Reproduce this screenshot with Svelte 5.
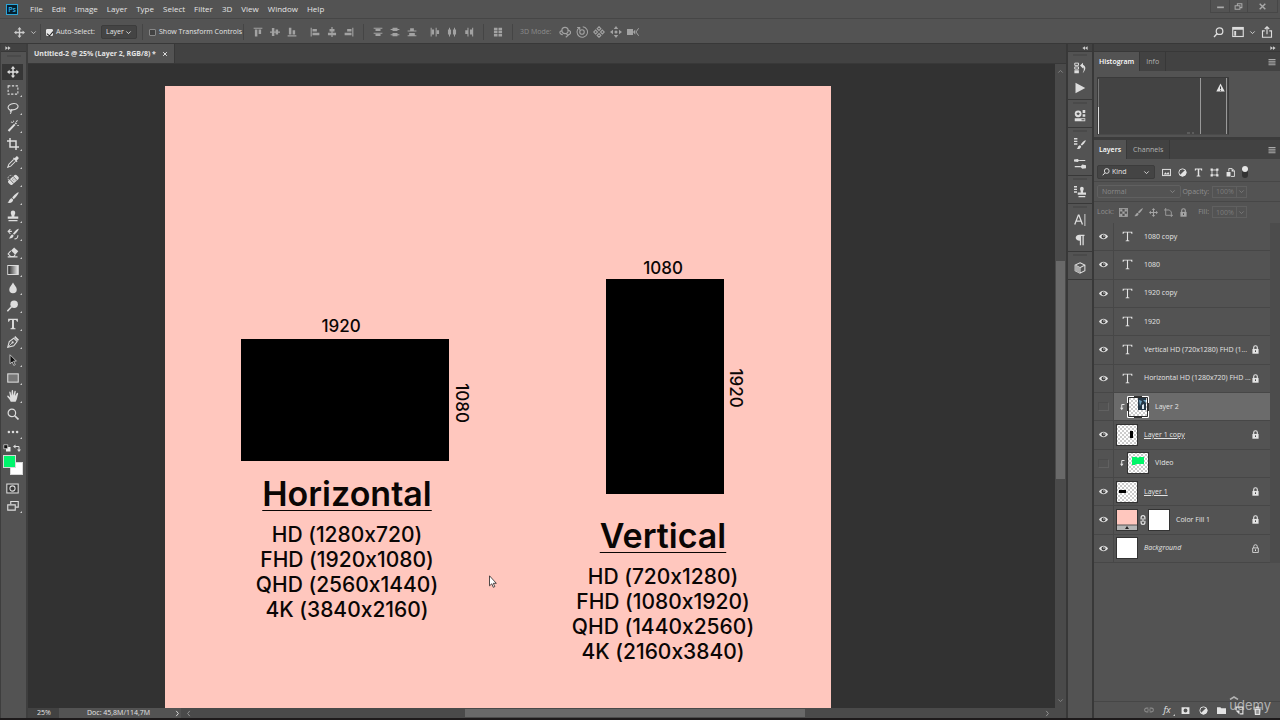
<script>
	const menus = ['File', 'Edit', 'Image', 'Layer', 'Type', 'Select', 'Filter', '3D', 'View', 'Window', 'Help'];

	// every icon lives on a 16x16 grid
	const icons = {
		move: '<path d="M8 0l3 3.500H9V7h3.500V5L16 8l-3.500 3V9H9v3.500h2L8 16l-3-3.500h2V9H3.500v2L0 8l3.500-3v2H7V3.500H5z"/>',
		marquee: '<rect x="1.500" y="2.500" width="13" height="11" fill="none" stroke="currentColor" stroke-width="1.400" stroke-dasharray="3 2"/>',
		lasso: '<path d="M5 11C1 10 .5 6.500 3 4.300 6 1.500 12.500 1.200 14.300 4.200 16 7.500 12 10.800 6.500 10.500 3.500 10 3.500 12.500 5.500 12.300 7 12 6.500 10 5.200 10.200M5 12.500c.8 1 .2 2.500-1 3" fill="none" stroke="currentColor" stroke-width="1.400"/>',
		wand: '<path d="M1 13.500L9.500 5l1.800 1.800L3 15.500zM10.300 4.200l1.200-1.200 1.800 1.800L12 6zM9 0l.6 2.500L8 3zM13.500 0l1 1-2 2-.8-.8zM13.500 6.500l2.500.5v1l-2.500-.5zM5.500 2l2.500 1-.5 1L5 3z"/>',
		crop: '<path d="M4 0v12h12M0 4h12v12" fill="none" stroke="currentColor" stroke-width="2"/>',
		eyedropper: '<path d="M9 4.500L2.500 11 1 15l4-1.500L11.500 7" fill="none" stroke="currentColor" stroke-width="1.400"/><path d="M8 3l1.300-1 1 1 2-2.300c1.300-1 4 1.500 3 3L13 6l1 1-1.200 1.300z"/>',
		heal: '<g transform="rotate(-42 8 8)"><rect x="1" y="4.500" width="15" height="7.500" rx="2.500"/><path d="M5.500 4.500v7.500M11.500 4.500v7.500" stroke="#535353"/><path d="M8 6.500v1M8 9v1M9.500 6.500v1M9.500 9v1" stroke="#535353"/></g><path d="M2 8C0 4 3 1 7 2" fill="none" stroke="currentColor" stroke-dasharray="1.500 1"/>',
		brush: '<path d="M15.500.5c.8.8-4 7.500-6.500 9L7 7.500C8.500 5 14.500-.2 15.500.5zM6.300 8.300l2 2C8 13.500 4.500 15.500.5 14c2.500-.5 2-4.800 5.800-5.700z"/>',
		stamp: '<path d="M5 3.500a3 3 0 0 1 6 0c0 2-1.200 2.500-1.200 5H15v3.300H1V8.500h5.200C6.200 6 5 5.500 5 3.500zM2 13.200h12V15H2z"/>',
		history: '<path d="M15.500 1c.8.8-3.500 6.500-6 8L8 7.500C9.500 5 14.500.3 15.500 1zM7.300 8.500l1.500 1.500c-.3 3-3 4.500-6.500 4 2-.7 1.500-4.500 5-5.500z"/><path d="M1 4.500h5.500M4.500 1.500L1.500 4.500 4.500 8M10 14.500c3 0 4.500-2 4.500-5" fill="none" stroke="currentColor" stroke-width="1.400"/>',
		eraser: '<path d="M9.500 2l5.500 5-4 4.500L5.500 6z"/><path d="M5 6.500L1.500 10.500 5 14h4l2-2.500M1 14.500h13" fill="none" stroke="currentColor" stroke-width="1.400"/>',
		gradient: '<defs><linearGradient id="ramp"><stop offset="0" stop-color="#222"/><stop offset="1" stop-color="#eee"/></linearGradient></defs><rect x="1" y="2" width="14" height="12" fill="url(#ramp)" stroke="currentColor" stroke-width="1.300"/>',
		blur: '<path d="M8 .5c2 4 5 6 5 9.500a5 5 0 0 1-10 0C3 6.500 6 4.500 8 .5z"/>',
		dodge: '<circle cx="9.500" cy="5.500" r="5"/><path d="M6 9l-5.500 6" stroke="currentColor" stroke-width="2"/>',
		type: '<path d="M1.500 1h13v4h-1.200c-.4-1.800-1-2.500-2.800-2.500H9.300V12c0 1.300.5 1.600 2 1.700V15H4.700v-1.300c1.500-.1 2-.4 2-1.700V2.500H5.500C3.700 2.500 3.100 3.200 2.700 5H1.500z"/>',
		thinType: '<path d="M1 1h14v3.500h-1c-.4-1.700-1-2.200-2.500-2.200H8.800V12.500c0 1.100.5 1.400 2 1.500v1H5.200v-1c1.500-.1 2-.4 2-1.500V2.300H4.500C3 2.300 2.400 2.800 2 4.500H1z"/>',
		pen: '<path d="M1 15L3 7.500 9 3l4.500 4.500L9 13z" fill="none" stroke="currentColor" stroke-width="1.400"/><path d="M1 15l6-6" stroke="currentColor"/><circle cx="7.500" cy="8.500" r="1.400"/><path d="M9.500 1.500l1.500-1.500 5 5-1.500 1.500z"/>',
		pathSelect: '<path d="M4 1l8.500 8.500H8.800L11 14.300 9 15.200 7 10.500 4 13z" fill="#111" stroke="currentColor"/>',
		rect: '<rect x="1" y="2.500" width="14" height="11" fill="#777" stroke="currentColor" stroke-width="1.400"/>',
		hand: '<path d="M5 15.500C4 12.500 1.500 10.500.3 8.500c-.2-1.300 1.400-1.300 2.200-.3L4.300 10 3 3c0-1.300 1.500-1.300 1.800 0l1 4.500L6.300 1c.2-1.200 1.700-1.200 1.800 0l.3 6.300L10 1.700c.4-1.100 1.800-.8 1.700.4l-.9 6 2.400-4c.8-.9 1.900-.2 1.600.8C13.500 9 13.800 12 11.500 15.500z"/>',
		zoom: '<circle cx="6.500" cy="6.500" r="5" fill="none" stroke="currentColor" stroke-width="1.600"/><path d="M10.300 10.300l5 5" stroke="currentColor" stroke-width="2.200"/>',
		dots: '<circle cx="2.500" cy="8" r="1.700"/><circle cx="8" cy="8" r="1.700"/><circle cx="13.500" cy="8" r="1.700"/>',
		quickMask: '<rect x="1" y="2.500" width="14" height="11" fill="#3a3a3a" stroke="currentColor" stroke-width="1.300"/><circle cx="8" cy="8" r="3.200" fill="none" stroke="currentColor" stroke-width="1.300"/>',
		screen: '<path d="M5 5.500V2h10v7.500h-3.500" fill="none" stroke="currentColor" stroke-width="1.500"/><path d="M1 6.500h10v7H1z" fill="none" stroke="currentColor" stroke-width="1.500"/>',
		chevron: '<path d="M3 5.500l5 5 5-5" fill="none" stroke="currentColor" stroke-width="2"/>',
		up: '<path d="M3 10.500l5-5 5 5" fill="none" stroke="currentColor" stroke-width="2"/>',
		alignTop: '<path d="M1 1h14v1.800H1zM3 4h4v11H3zM9 4h4v7H9z"/>',
		alignMiddle: '<path d="M0 7h16v2H0zM3 1.500h4v13H3zM9 4h4v8H9z"/>',
		alignBottom: '<path d="M1 13.200h14V15H1zM3 1h4v11H3zM9 5h4v7H9z"/>',
		alignLeft: '<path d="M1 1h1.800v14H1zM4 3h7v4H4zM4 9h11v4H4z"/>',
		alignCenter: '<path d="M7 0h2v16H7zM4 3h8v4H4zM1.500 9h13v4h-13z"/>',
		alignRight: '<path d="M13.200 1H15v14h-1.800zM5 3h7v4H5zM1 9h11v4H1z"/>',
		distTop: '<path d="M1 1h14v1.700H1zM4 3h8v3.500H4zM1 9h14v1.700H1zM4 11h8v3.500H4z"/>',
		distMiddle: '<path d="M1 3h14v1.700H1zM4 1.300h8v5H4zM1 11.500h14v1.700H1zM4 9.700h8v5H4z"/>',
		distBottom: '<path d="M1 5.500h14v1.700H1zM5 2h6v4H5zM1 13h14v1.700H1zM3.500 9.500h9V13h-9z"/>',
		distLeft: '<path d="M1 1h1.700v14H1zM3 4h3.500v8H3zM9 1h1.700v14H9zM11 5h3.500v6H11z"/>',
		distCenter: '<path d="M3.200 1h1.600v14H3.200zM1.500 4h5v8h-5zM11.200 1h1.600v14h-1.600zM9.500 4h5v8h-5z"/>',
		distRight: '<path d="M5.500 1h1.700v14H5.500zM2 5h3.500v6H2zM13 1h1.700v14H13zM9.500 4H13v8H9.500z"/>',
		autoAlign: '<path d="M1.500 1h5.700v4H1.500zM8.800 1h5.700v4H8.800zM1.500 6h5.700v4H1.500zM8.800 6h5.700v4H8.800zM1.500 11h5.700v4H1.500zM8.800 11h5.700v4H8.800z"/>',
		orbit: '<path d="M5 11.500C0 11 0 6 4.500 6.500M11.500 5.500c5 .5 5.500 5.500 0 6.500M9 9.500L12 12.500 9 15" fill="none" stroke="currentColor" stroke-width="1.500"/><circle cx="8" cy="6" r="4.200" fill="none" stroke="currentColor" stroke-width="1.500"/>',
		roll: '<circle cx="8" cy="8" r="3" fill="none" stroke="currentColor" stroke-width="1.500"/><path d="M4 2.500A7 7 0 1 0 9 1M1.500 2h3.500v3.500" fill="none" stroke="currentColor" stroke-width="1.400"/>',
		pan: '<path d="M8 1l2.500 2.500L8 6 5.500 3.500zM8 10l2.500 2.500L8 15l-2.500-2.500zM3.500 5.500L6 8l-2.500 2.500L1 8zM12.500 5.500L15 8l-2.500 2.500L10 8z" fill="none" stroke="currentColor" stroke-width="1.500"/>',
		slide: '<circle cx="8" cy="8" r="2"/><path d="M8 0l3 4H5zM8 16l3-4H5zM0 8l4-3v6zM16 8l-4-3v6z"/>',
		camera: '<path d="M0 4h8v8H0zM8 8l3-3.500v7z"/><path d="M15.500 3L12 8l3.500 5" fill="none" stroke="currentColor" stroke-width="1.300"/>',
		search: '<circle cx="9.500" cy="6" r="4.800" fill="none" stroke="currentColor" stroke-width="1.800"/><path d="M6 9.500L1.500 14.500" stroke="currentColor" stroke-width="2"/>',
		workspace: '<rect x="1" y="2" width="14" height="12" fill="none" stroke="currentColor" stroke-width="1.500"/><path d="M1 2h14v3H1zM3 6.500h2.500V13H3z"/>',
		share: '<path d="M5 6.500H2V15h12V6.500h-3M8 11V1M5 4l3-3 3 3" fill="none" stroke="currentColor" stroke-width="1.500"/>',
		minimize: '<path d="M2 8h12v3H2z"/>',
		restore: '<path d="M6 6V3h8v7h-3M2 6.500h8.500V13H2z" fill="none" stroke="currentColor" stroke-width="1.800"/>',
		close: '<path d="M3 3l10 10M13 3L3 13" stroke="currentColor" stroke-width="2.500"/>',
		historyPanel: '<path d="M1 1.500h5v3H1zM1 6.500h5v3H1z" fill="none" stroke="currentColor" stroke-width="1.300"/><path d="M.5 11H6.500v4H.5zM8 4.500L12 1v2.500c4.500 2 4 7.500-.5 11.500 2-4.500 2-6.500.5-8v1.500z"/>',
		play: '<path d="M2 1l13 7-13 7z"/>',
		library: '<circle cx="5.500" cy="5" r="4.500"/><path d="M3 5l2.500-2L8 5 5.500 7z" fill="#535353"/><path d="M11.500 0H15v4h-3.500zM11.500 5.500H15V9h-3.500zM1 11h14v4H1z"/><path d="M10 13h4" stroke="#535353" stroke-width="1.500"/>',
		brushPreset: '<path d="M0 1h4.500M0 4.500h4.500M0 8h4.500" stroke="currentColor" stroke-width="1.700"/><path d="M15.500 3c.8.8-3 6-5 7L9 8.500C10.500 6.500 14.500 2 15.500 3zM8 9.500l1.500 1.500c0 3-3 4.500-6 3.500 2-.5 1-4.500 4.500-5z"/>',
		brushSettings: '<path d="M0 2l5-.8 2 2-2 2L0 4.500zM7 2.500h8v1.500H7zM16 9.500l-5-.8-2.500 2.800L11 14.300l5-.8zM1 10.700h8v1.500H1z"/>',
		cloneSource: '<path d="M0 1h4M0 4.500h4M0 8h4" stroke="currentColor" stroke-width="1.700"/><path d="M8 3.500a2.500 2.500 0 0 1 5 0c0 1.500-1 2-1 5h4v3.300H5V8.500h4c0-3-1-3.500-1-5zM6 13.200h9V15H6z"/>',
		character: '<path d="M1 14L5.800 1.500h.8L11.300 14M2.800 9.500h6.600" fill="none" stroke="currentColor" stroke-width="1.700"/><path d="M14.500 0v16" stroke="currentColor" stroke-width="1.200"/>',
		paragraph: '<path d="M7.500 1H14v1.700h-1V15h-1.700V2.700H9.500V15H7.800V9C.5 9 .5 1 7.500 1z"/>',
		cube: '<path d="M8 1l6.500 3v7.500L8 15l-6.500-3.500V4zM1.500 4L8 7.500 14.500 4M8 7.500V15" fill="none" stroke="currentColor" stroke-width="1.400"/><path d="M1.500 4L8 7.500V15l-6.500-3.500z" fill="#aaa"/>',
		image: '<rect x="1" y="2.500" width="14" height="11" fill="none" stroke="currentColor" stroke-width="1.700"/><path d="M3 11.500l3-4 2.500 2.500L11 7l2.500 4.500z"/>',
		adjust: '<circle cx="8" cy="8" r="6.500" fill="none" stroke="currentColor" stroke-width="1.600"/><path d="M12.600 3.400A6.500 6.500 0 1 1 3.400 12.600z"/>',
		shape: '<path d="M3.500 3.500h9v9h-9z" fill="none" stroke="currentColor" stroke-width="1.500"/><path d="M1 1h4v4H1zM11 1h4v4h-4zM1 11h4v4H1zM11 11h4v4h-4z"/>',
		smart: '<path d="M5 6V1h6l4 4v10H9" fill="none" stroke="currentColor" stroke-width="1.600"/><path d="M1 7h7v8H1zM10 1v5h5z"/>',
		checker: '<rect x="1" y="1" width="14" height="14" fill="none" stroke="currentColor" stroke-width="1.500"/><path d="M2 2h4v4H2zM10 2h4v4h-4zM6 6h4v4H6zM2 10h4v4H2zM10 10h4v4h-4z"/>',
		artboard: '<path d="M3 0v13h13M0 3.500h9.500L13 7v9" fill="none" stroke="currentColor" stroke-width="1.500"/>',
		lock: '<path d="M2.500 7h11v8.500h-11z"/><path d="M4.800 7V4.500a3.200 3.200 0 0 1 6.400 0V7" fill="none" stroke="currentColor" stroke-width="2"/><path d="M8 9.500v3" stroke="#484848" stroke-width="1.800"/>',
		lockOpen: '<path d="M3 7h10v8H3zM4.800 7V4.500a3.200 3.200 0 0 1 6.400 0V7" fill="none" stroke="currentColor" stroke-width="1.500"/><path d="M8 9.500v3" stroke="currentColor" stroke-width="1.800"/>',
		eye: '<path d="M0 8c4-6.500 12-6.500 16 0-4 6.500-12 6.500-16 0z"/><circle cx="8" cy="8" r="3.500" fill="#3c3c3c"/><circle cx="8.800" cy="7.200" r="1.300"/>',
		clip: '<path d="M13 3H7.500v9" fill="none" stroke="currentColor" stroke-width="2"/><path d="M4 9.500h7L7.500 14.500z"/>',
		chain: '<path d="M5 7V4a3 3 0 0 1 6 0v3M5 9v3a3 3 0 0 0 6 0V9M8 5v6" fill="none" stroke="currentColor" stroke-width="2"/>',
		link: '<path d="M7 5H4a3 3 0 0 0 0 6h3M9 5h3a3 3 0 0 1 0 6H9M5 8h6" fill="none" stroke="currentColor" stroke-width="1.700"/>',
		mask: '<path fill-rule="evenodd" d="M1 2h14v12H1zM8 4.500a3.500 3.500 0 1 0 0 7 3.500 3.500 0 0 0 0-7z"/>',
		folder: '<path d="M0 2h6l1.500 2H16v10H0z"/>',
		newLayer: '<path d="M2 7V2h12v12H9" fill="none" stroke="currentColor" stroke-width="2"/><path d="M1 8h7v7z"/>',
		trash: '<path d="M5.500 1h5v1.500H15V4H1V2.500h4.500zM2.500 5h11l-.8 11H3.300z"/><path d="M6 7v7M8 7v7M10 7v7" stroke="#535353"/>',
		warning: '<path d="M8 1l7.500 14H.5z"/><path d="M8 6v5M8 12.300v1.500" stroke="#424242" stroke-width="1.800"/>',
		menu: '<path d="M1 2h14v2H1zM1 5.500h14v2H1zM1 9h14v2H1zM1 12.500h14v2H1z"/>',
		forward: '<path d="M1 3l7 5-7 5zM8 3l7 5-7 5z"/>',
		back: '<path d="M15 3L8 8l7 5zM8 3L1 8l7 5z"/>',
		right: '<path d="M5 2l5 6-5 6" fill="none" stroke="currentColor" stroke-width="2"/>',
		left: '<path d="M11 2L6 8l5 6" fill="none" stroke="currentColor" stroke-width="2"/>',
		defaults: '<path d="M6 6h9v9H6z" fill="#eee"/><path d="M1.500 1.500h8v8h-8z" fill="#111" stroke="currentColor" stroke-width="1.500"/>',
		swap: '<path d="M4 5h8v8" fill="none" stroke="currentColor" stroke-width="2"/><path d="M5 1v8L0 5zM8 11h8l-4 5z"/>'
	};

	const tools = [
		['move', 'Move'], ['marquee', 'Rectangular Marquee'], ['lasso', 'Lasso'], ['wand', 'Magic Wand'],
		['crop', 'Crop'], ['eyedropper', 'Eyedropper'], ['heal', 'Healing Brush'], ['brush', 'Brush'],
		['stamp', 'Clone Stamp'], ['history', 'History Brush'], ['eraser', 'Eraser'], ['gradient', 'Gradient'],
		['blur', 'Blur'], ['dodge', 'Dodge'], ['type', 'Horizontal Type'], ['pen', 'Pen'],
		['pathSelect', 'Path Selection'], ['rect', 'Rectangle'], ['hand', 'Hand'], ['zoom', 'Zoom'], ['dots', 'Edit Toolbar']
	];

	const alignGroups = [
		['alignTop', 'alignMiddle', 'alignBottom'],
		['alignLeft', 'alignCenter', 'alignRight'],
		null,
		['distTop', 'distMiddle', 'distBottom'],
		['distLeft', 'distCenter', 'distRight'],
		null,
		['autoAlign'],
		null
	];

	const docks = [
		['historyPanel', 'play'],
		['library'],
		['brushPreset', 'brushSettings'],
		['cloneSource'],
		['character', 'paragraph'],
		['cube']
	];

	const layers = [
		{ name: '1080 copy', kind: 'text' },
		{ name: '1080', kind: 'text' },
		{ name: '1920 copy', kind: 'text' },
		{ name: '1920', kind: 'text' },
		{ name: 'Vertical HD (720x1280) FHD (1...', kind: 'text', lock: 'lock' },
		{ name: 'Horizontal HD (1280x720) FHD ...', kind: 'text', lock: 'lock' },
		{ name: 'Layer 2', kind: 'photo', hidden: true, clipped: true },
		{ name: 'Layer 1 copy', kind: 'tall', base: true, lock: 'lock' },
		{ name: 'VIdeo', kind: 'video', hidden: true, clipped: true },
		{ name: 'Layer 1', kind: 'wide', base: true, lock: 'lock' },
		{ name: 'Color Fill 1', kind: 'fill', lock: 'lock' },
		{ name: 'Background', kind: 'plain', lock: 'lockOpen' }
	];

	// artwork on the artboard, in screen pixels at 25%
	const frames = [
		{ x: 76, y: 253, w: 208, h: 122 },
		{ x: 441, y: 193, w: 118, h: 215 }
	];
	const labels = [
		{ text: '1920', x: 176, y: 240 },
		{ text: '1080', x: 297, y: 317, upright: true },
		{ text: '1080', x: 498, y: 182 },
		{ text: '1920', x: 571, y: 302, upright: true }
	];
	const captions = [
		{ title: 'Horizontal', x: 182, y: 387, sizes: ['HD (1280x720)', 'FHD (1920x1080)', 'QHD (2560x1440)', '4K (3840x2160)'] },
		{ title: 'Vertical', x: 498, y: 429, sizes: ['HD (720x1280)', 'FHD (1080x1920)', 'QHD (1440x2560)', '4K (2160x3840)'] }
	];

	let activeTool = $state('move');
	let activeLayer = $state('Layer 2');
</script>

{#snippet icon(name, size = 12)}
	<svg class="icon" width={size} height={size} viewBox="0 0 16 16" aria-hidden="true">{@html icons[name]}</svg>
{/snippet}

{#snippet thumb(kind)}
	<svg class="thumb" width="22" height="22" viewBox="0 0 22 22" aria-hidden="true">
		<defs>
			<pattern id="grid-{kind}" width="4" height="4" patternUnits="userSpaceOnUse">
				<rect width="4" height="4" fill="#fff" />
				<path d="M0 0h2v2H0zM2 2h2v2H2z" fill="#ccc" />
			</pattern>
		</defs>
		<rect x="1" y="1" width="20" height="20" fill="url(#grid-{kind})" />
		{#if kind === 'tall'}
			<rect x="14" y="7" width="3" height="7" />
		{:else if kind === 'wide'}
			<rect x="3" y="9" width="7" height="3" />
		{:else if kind === 'video'}
			<path d="M5 5h5l1 1 1-1h5v7H9l-1 1H5z" fill="#00f568" />
		{:else if kind === 'photo'}
			<path d="M11 2h8v12h-8z" fill="#243746" />
			<path d="M12 4l3 1-2 5zM16 4h3v3z" fill="#6fa0bd" />
			<path d="M15 9l2-1v5h-2z" fill="#dde6ee" />
			<path d="M1.500 1.500h19v19h-19z" fill="none" stroke="#2c2c2c" />
			<path d="M.5 7V.5H7M15 .5h6.500V7M21.500 15v6.500H15M7 21.500H.5V15" fill="none" stroke="#fff" />
		{:else if kind === 'fill'}
			<rect x="1" y="1" width="20" height="20" fill="#ffc7be" />
			<path d="M1 16h20v5H1z" fill="#b5b5b5" />
			<path d="M1 16h20" stroke="#555" />
			<path d="M11 17l2 3H9z" fill="#222" />
		{:else if kind === 'plain'}
			<rect x="1" y="1" width="20" height="20" fill="#fff" />
		{/if}
	</svg>
{/snippet}

<div class="app">
	<header class="menubar">
		<span class="logo">Ps</span>
		<nav>
			{#each menus as menu}
				<button class="menu">{menu}</button>
			{/each}
		</nav>
		<div class="window-buttons">
			<button aria-label="Minimize">{@render icon('minimize', 9)}</button>
			<button aria-label="Restore">{@render icon('restore', 9)}</button>
			<button class="wide" aria-label="Close">{@render icon('close', 9)}</button>
		</div>
	</header>

	<div class="options">
		<button class="preset" aria-label="Tool preset">{@render icon('move', 11)}{@render icon('chevron', 7)}</button>
		<span class="rule"></span>
		<label class="check auto"><input type="checkbox" checked />Auto-Select:</label>
		<div class="select target">
			<select aria-label="Auto-select target"><option>Layer</option><option>Group</option></select>
			{@render icon('chevron', 7)}
		</div>
		<span class="rule"></span>
		<label class="check transform"><input type="checkbox" />Show Transform Controls</label>
		<span class="rule"></span>
		{#each alignGroups as group}
			{#if group}
				<div class="aligns">
					{#each group as name}
						<button aria-label={name}>{@render icon(name, 10)}</button>
					{/each}
				</div>
			{:else}
				<span class="rule after"></span>
			{/if}
		{/each}
		<span class="mode">3D Mode:</span>
		<div class="aligns">
			{#each ['orbit', 'roll', 'pan', 'slide', 'camera'] as name}
				<button aria-label={name}>{@render icon(name, 12)}</button>
			{/each}
		</div>
		<div class="right-tools">
			<button aria-label="Search">{@render icon('search', 11)}</button>
			<button class="workspaces" aria-label="Workspace">{@render icon('workspace', 12)}{@render icon('chevron', 7)}</button>
			<button aria-label="Share">{@render icon('share', 12)}</button>
		</div>
	</div>

	<div class="workspace">
		<aside class="toolbar">
			<div class="column-head start">{@render icon('forward', 6)}</div>
			<div class="grip"></div>
			{#each tools as [name, label], i}
				<button class="tool" class:active={activeTool === name} aria-label={label} onclick={() => (activeTool = name)}>
					{@render icon(name, 12)}
					{#if i > 0 && name !== 'zoom'}<i class="corner"></i>{/if}
				</button>
			{/each}
			<div class="mini">
				<button aria-label="Default colors">{@render icon('defaults', 8)}</button>
				<button aria-label="Swap colors">{@render icon('swap', 8)}</button>
			</div>
			<div class="swatches">
				<button class="back" aria-label="Background color"></button>
				<button class="front" aria-label="Foreground color"></button>
			</div>
			<button class="tool" aria-label="Quick mask">{@render icon('quickMask', 13)}</button>
			<button class="tool" aria-label="Screen mode">{@render icon('screen', 12)}<i class="corner"></i></button>
		</aside>

		<main class="document">
			<div class="doc-tabs">
				<div class="doc-tab">
					<span>Untitled-2 @ 25% (Layer 2, RGB/8) *</span>
					<button aria-label="Close document">{@render icon('close', 6)}</button>
				</div>
			</div>
			<div class="view">
				<div class="stage">
					<div class="artboard">
						{#each frames as f}
							<div class="frame" style="left: {f.x}px; top: {f.y}px; width: {f.w}px; height: {f.h}px"></div>
						{/each}
						{#each labels as l}
							<span class="dimension" class:upright={l.upright} style="left: {l.x}px; top: {l.y}px">{l.text}</span>
						{/each}
						{#each captions as c}
							<div class="caption" style="left: {c.x}px; top: {c.y}px">
								<h2>{c.title}</h2>
								{#each c.sizes as size}
									<p>{size}</p>
								{/each}
							</div>
						{/each}
						<svg class="cursor" width="8" height="13" viewBox="0 0 8 13" aria-hidden="true">
							<path d="M.5.800v10l2.300-2 1.500 3.500 1.500-.700-1.500-3.300h3z" fill="#fff" stroke="#222" stroke-width=".8" />
						</svg>
					</div>
				</div>
				<div class="vscroll">
					{@render icon('up', 7)}
					<div class="vtrack"><div class="vthumb"></div></div>
					{@render icon('chevron', 7)}
				</div>
			</div>
			<footer class="status">
				<input class="zoom-level" aria-label="Zoom level" value="25%" />
				<span class="doc-size">Doc: 45,8M/114,7M</span>
				<button aria-label="Status menu">{@render icon('right', 7)}</button>
				<div class="hscroll">
					{@render icon('left', 7)}
					<div class="htrack"><div class="hthumb"></div></div>
					{@render icon('right', 7)}
				</div>
			</footer>
		</main>

		<aside class="dock">
			<div class="column-head end">{@render icon('back', 6)}</div>
			{#each docks as group}
				<div class="dock-group">
					<div class="grip"></div>
					{#each group as name}
						<button aria-label={name}>{@render icon(name, 12)}</button>
					{/each}
				</div>
			{/each}
		</aside>

		<aside class="panels">
			<div class="column-head end">{@render icon('forward', 6)}</div>
			<section class="histogram-panel">
				<div class="tabs">
					<button class="tab active">Histogram</button>
					<button class="tab">Info</button>
					<button class="panel-menu" aria-label="Histogram panel menu">{@render icon('menu', 8)}</button>
				</div>
				<div class="histogram">
					<svg width="132" height="58" viewBox="0 0 132 58" aria-label="Histogram">
						<path d="M.5 57.500V.500h131v57" fill="#434343" stroke="#3a3a3a" />
						<path d="M1.500 2v55" stroke="#777" />
						<path d="M1.500 30v27" stroke="#ddd" />
						<path d="M103.500 1v56M129.500 1v56" stroke="#999" />
						<path d="M90 56h3M95 56h2" stroke="#777" />
					</svg>
					<span class="warning">{@render icon('warning', 9)}</span>
				</div>
			</section>

			<section class="layers-panel">
				<div class="tabs">
					<button class="tab active">Layers</button>
					<button class="tab">Channels</button>
					<button class="panel-menu" aria-label="Layers panel menu">{@render icon('menu', 8)}</button>
				</div>
				<div class="row filter">
					<div class="select kind">
						{@render icon('search', 8)}
						<select aria-label="Filter type"><option>Kind</option><option>Name</option></select>
						{@render icon('chevron', 7)}
					</div>
					<div class="filters">
						{#each ['image', 'adjust', 'type', 'shape', 'smart'] as name}
							<button aria-label={name}>{@render icon(name, 9)}</button>
						{/each}
					</div>
					<button class="toggle" aria-label="Toggle filtering"><i></i></button>
				</div>
				<div class="row dim">
					<div class="select blend">
						<select aria-label="Blend mode" disabled><option>Normal</option></select>
						{@render icon('chevron', 7)}
					</div>
					<label class="percent">Opacity:<input value="100%" disabled /><i>{@render icon('chevron', 7)}</i></label>
				</div>
				<div class="row dim">
					<span class="lock-label">Lock:</span>
					<div class="locks">
						{#each ['checker', 'brush', 'move', 'artboard', 'lock'] as name}
							<button aria-label={name} disabled>{@render icon(name, 9)}</button>
						{/each}
					</div>
					<label class="percent">Fill:<input value="100%" disabled /><i>{@render icon('chevron', 7)}</i></label>
				</div>
				<ul class="layers">
					{#each layers as layer}
						<li class:selected={activeLayer === layer.name}>
							<button class="visibility" aria-label="Visibility of {layer.name}">
								{#if layer.hidden}<i class="empty"></i>{:else}{@render icon('eye', 9)}{/if}
							</button>
							<button class="layer" class:base={layer.base} class:background={layer.kind === 'plain'} onclick={() => (activeLayer = layer.name)}>
								{#if layer.clipped}<span class="clip">{@render icon('clip', 8)}</span>{/if}
								{#if layer.kind === 'text'}
									<span class="type-thumb">{@render icon('thinType', 11)}</span>
								{:else}
									{@render thumb(layer.kind)}
								{/if}
								{#if layer.kind === 'fill'}
									{@render icon('chain', 10)}
									{@render thumb('plain')}
								{/if}
								<span class="name">{layer.name}</span>
							</button>
							{#if layer.lock}<span class="locked">{@render icon(layer.lock, 9)}</span>{/if}
						</li>
					{/each}
				</ul>
				<div class="layer-actions">
					<button class="off" aria-label="Link layers">{@render icon('link', 10)}</button>
					<button class="fx" aria-label="Layer style">fx<i class="corner"></i></button>
					{#each ['mask', 'adjust', 'folder', 'newLayer', 'trash'] as name}
						<button aria-label={name}>{@render icon(name, 9)}</button>
					{/each}
				</div>
			</section>
		</aside>
	</div>

	<div class="watermark">
		<svg width="10" height="4" viewBox="0 0 10 4" aria-hidden="true"><path d="M1 3.500l4-2.500 4 2.500" fill="none" stroke="currentColor" stroke-width="1.500" /></svg>
		udemy
	</div>
</div>

<style>
	:global(body) {
		margin: 0;
		background: #1d1a1b;
	}

	.app {
		position: relative;
		display: flex;
		flex-direction: column;
		box-sizing: border-box;
		height: 100vh;
		padding-bottom: 2px;
		overflow: hidden;
		background: #1d1a1b;
		color: #e4e4e4;
		font-family: 'Open Sans', 'Noto Sans', sans-serif;
		font-size: 7px;
		line-height: 10px;
	}

	.app :global(*) {
		box-sizing: border-box;
	}

	button,
	select,
	input {
		margin: 0;
		padding: 0;
		border: 0;
		border-radius: 0;
		background: none;
		color: inherit;
		font: inherit;
	}

	button {
		display: flex;
		align-items: center;
		justify-content: center;
	}

	.icon {
		display: block;
		flex: none;
		fill: currentColor;
	}

	.menubar {
		display: flex;
		flex: none;
		align-items: center;
		height: 19px;
		padding-left: 6px;
		background: #535353;
		border-bottom: 1px solid #464646;
	}

	.logo {
		width: 12px;
		height: 11px;
		border: 1px solid #2ba5d8;
		background: #06202e;
		color: #35b5ea;
		font-size: 7px;
		font-weight: 600;
		line-height: 9px;
		text-align: center;
	}

	nav {
		display: flex;
		padding-left: 7px;
	}

	.menu {
		padding: 0 4px 0 5px;
		font-size: 8px;
	}

	.window-buttons {
		display: flex;
		align-self: flex-start;
		height: 13px;
		margin: 0 2px 0 auto;
		border: 1px solid #474747;
		border-top: 0;
		color: #aaa;
	}

	.window-buttons button {
		width: 18px;
	}

	.window-buttons button + button {
		border-left: 1px solid #474747;
	}

	.window-buttons .wide {
		width: 30px;
	}

	.options {
		display: flex;
		flex: none;
		align-items: center;
		height: 25px;
		padding: 2px 0 0 14px;
		background: #535353;
		border-bottom: 1px solid #383838;
	}

	.preset {
		gap: 5px;
		width: 26px;
		justify-content: flex-start;
		color: #ccc;
	}

	.rule {
		width: 1px;
		height: 16px;
		background: #454545;
	}

	.rule.after {
		margin-left: 3px;
	}

	.check {
		display: flex;
		align-items: center;
		gap: 3px;
		white-space: nowrap;
	}

	.check input {
		display: flex;
		justify-content: center;
		appearance: none;
		width: 7px;
		height: 7px;
		border: 1px solid #888;
		border-radius: 1px;
		background: #424242;
	}

	.check input:checked {
		border-color: #e6e6e6;
		background: #e6e6e6;
	}

	.check input:checked::before {
		width: 3px;
		height: 5px;
		border: solid #222;
		border-width: 0 1px 1px 0;
		content: '';
		transform: rotate(40deg);
	}

	.auto {
		width: 60px;
		padding-left: 5px;
	}

	.transform {
		width: 100px;
		padding-left: 6px;
	}

	.select {
		display: flex;
		align-items: center;
		padding: 0 4px;
		border: 1px solid #3c3c3c;
		border-radius: 2px;
		background: #444;
	}

	.select select {
		flex: 1;
		min-width: 0;
		appearance: none;
	}

	.target {
		width: 36px;
		height: 14px;
		margin-right: 5px;
	}

	.aligns {
		display: flex;
		padding: 0 3px;
		color: #a2a2a2;
	}

	.aligns button {
		width: 17px;
		height: 16px;
	}

	.rule + .aligns {
		padding-left: 5px;
	}

	.mode {
		width: 40px;
		padding-left: 7px;
		color: #8c8c8c;
		white-space: nowrap;
	}

	.right-tools {
		display: flex;
		gap: 5px;
		margin-left: auto;
		padding-right: 7px;
		color: #ddd;
	}

	.workspaces {
		gap: 5px;
		padding-left: 3px;
	}

	.workspace {
		display: flex;
		flex: 1;
		min-height: 0;
		background: #383838;
	}

	.column-head {
		display: flex;
		flex: none;
		align-items: center;
		height: 8px;
		padding: 0 4px;
		background: #424242;
		border-bottom: 1px solid #383838;
		color: #ccc;
	}

	.column-head.end {
		justify-content: flex-end;
	}

	.toolbar {
		display: flex;
		flex: none;
		flex-direction: column;
		width: 28px;
		border: solid #3e3e3e;
		border-width: 0 2px 0 1px;
		background: #535353;
		color: #ddd;
	}

	.grip {
		flex: none;
		width: 14px;
		height: 2px;
		margin: 2px auto;
		background: #4a4a4a;
	}

	.toolbar > .grip {
		margin: 3px auto 6px;
	}

	.tool {
		position: relative;
		flex: none;
		width: 21px;
		height: 18px;
		margin-left: 1px;
	}

	.tool.active {
		border: solid #535353;
		border-width: 1px 0;
		background: #363636;
	}

	.corner {
		position: absolute;
		right: 1px;
		bottom: 2px;
		border: 1px solid #ccc;
		border-top-color: transparent;
		border-left-color: transparent;
	}

	.mini {
		display: flex;
		justify-content: space-between;
		padding: 3px 5px 3px 2px;
	}

	.swatches {
		position: relative;
		width: 20px;
		height: 20px;
		margin: 0 0 4px 2px;
	}

	.swatches button {
		position: absolute;
		width: 13px;
		height: 13px;
		border: 1px solid #d8d8d8;
	}

	.back {
		right: 0;
		bottom: 0;
		background: #fff;
	}

	.front {
		top: 0;
		left: 0;
		background: #00f56c;
	}

	.document {
		display: flex;
		flex: 1;
		flex-direction: column;
		min-width: 0;
	}

	.doc-tabs {
		display: flex;
		flex: none;
		height: 20px;
		background: #424242;
		border-bottom: 1px solid #383838;
	}

	.doc-tab {
		display: flex;
		align-items: center;
		gap: 6px;
		padding: 0 6px;
		background: #535353;
		border-right: 1px solid #383838;
		font-weight: 700;
		white-space: nowrap;
	}

	.view {
		display: flex;
		flex: 1;
		min-height: 0;
	}

	.stage {
		flex: 1;
		min-width: 0;
		padding: 22px 0 0 137px;
		overflow: hidden;
		background: #323232;
	}

	.artboard {
		position: relative;
		width: 666px;
		height: 100%;
		background: #ffc7be;
		color: #0a0605;
		font-family: Inter, 'Liberation Sans', sans-serif;
		font-feature-settings: 'calt' 0;
	}

	.frame {
		position: absolute;
		background: #000;
	}

	.dimension {
		position: absolute;
		font-size: 17px;
		font-weight: 500;
		line-height: 20px;
		transform: translate(-50%, -50%);
	}

	.upright {
		writing-mode: vertical-rl;
	}

	.caption {
		position: absolute;
		text-align: center;
		white-space: nowrap;
		transform: translateX(-50%);
	}

	.caption h2 {
		margin: 0 0 7px;
		font-size: 34px;
		font-weight: 600;
		line-height: 42px;
		text-decoration: underline 1px;
		text-underline-offset: 4px;
	}

	.caption p {
		margin: 0;
		font-size: 21px;
		font-weight: 500;
		line-height: 25px;
	}

	.cursor {
		position: absolute;
		top: 489px;
		left: 324px;
	}

	.vscroll {
		display: flex;
		flex: none;
		flex-direction: column;
		align-items: center;
		width: 11px;
		padding: 4px 1px;
		background: #4a4a4a;
		color: #888;
	}

	.vtrack {
		flex: 1;
		width: 100%;
		padding-top: 186px;
	}

	.vthumb {
		height: 218px;
		background: #696969;
	}

	.status {
		display: flex;
		flex: none;
		align-items: center;
		height: 10px;
		background: #535353;
	}

	.zoom-level {
		width: 31px;
		height: 10px;
		padding-left: 9px;
		background: #424242;
	}

	.doc-size {
		width: 115px;
		padding-left: 28px;
		white-space: nowrap;
	}

	.hscroll {
		display: flex;
		flex: 1;
		align-items: center;
		padding: 0 15px 0 4px;
		background: #4a4a4a;
		color: #999;
	}

	.htrack {
		flex: 1;
		height: 10px;
		padding: 1px 0;
	}

	.hthumb {
		width: 40%;
		height: 8px;
		margin-left: 32%;
		background: #696969;
	}

	.dock {
		flex: none;
		width: 25px;
		margin: 0 1px 0 2px;
		border-right: 1px solid #383838;
		background: #535353;
		color: #ddd;
	}

	.dock-group {
		padding-bottom: 1px;
		border-bottom: 1px solid #383838;
	}

	.dock-group button {
		width: 24px;
		height: 20px;
	}

	.panels {
		display: flex;
		flex: none;
		flex-direction: column;
		width: 186px;
		background: #535353;
	}

	.tabs {
		display: flex;
		height: 19px;
		background: #424242;
	}

	.tab {
		padding: 0 6px;
		border-right: 1px solid #383838;
		color: #b4b4b4;
	}

	.tab.active {
		padding: 0 5px;
		background: #535353;
		color: #fff;
		font-weight: 600;
	}

	.panel-menu {
		margin-left: auto;
		padding-right: 4px;
		color: #aaa;
	}

	.histogram-panel {
		border-bottom: 3px solid #3c3c3c;
	}

	.histogram {
		position: relative;
		padding: 6px 0 2px 3px;
	}

	.histogram svg {
		display: block;
	}

	.warning {
		position: absolute;
		top: 12px;
		left: 122px;
	}

	.layers-panel {
		display: flex;
		flex: 1;
		flex-direction: column;
		min-height: 0;
	}

	.row {
		display: flex;
		flex: none;
		align-items: center;
		height: 20px;
		padding: 0 3px;
		border-bottom: 1px solid #474747;
	}

	.row.filter {
		height: 23px;
		padding-top: 4px;
	}

	.row:has(+ .layers) {
		border-bottom: 0;
	}

	.kind {
		gap: 2px;
		width: 58px;
		height: 14px;
	}

	.filters,
	.locks {
		display: flex;
	}

	.filters {
		padding: 0 2px 0 3px;
	}

	.filters button {
		width: 16px;
	}

	.toggle {
		align-items: flex-start;
		width: 6px;
		height: 12px;
		margin-left: 2px;
		border-radius: 3px;
		background: #333;
	}

	.toggle i {
		width: 6px;
		height: 6px;
		border-radius: 50%;
		background: #e6e6e6;
	}

	.dim {
		color: #8f8f8f;
	}

	.blend {
		width: 84px;
		height: 13px;
		border-color: #606060;
		background: none;
		color: #8a8a8a;
	}

	.blend select,
	.percent input {
		opacity: 1;
	}

	.percent {
		display: flex;
		align-items: center;
		margin-left: auto;
		padding-right: 30px;
		white-space: nowrap;
	}

	.percent input {
		width: 25px;
		height: 12px;
		margin-left: 3px;
		padding-left: 3px;
		border: 1px solid #606060;
		color: #7c7c7c;
	}

	.percent i {
		display: flex;
		align-items: center;
		width: 10px;
		height: 12px;
		padding-left: 1px;
		border: 1px solid #606060;
		border-left: 0;
		color: #7c7c7c;
	}

	.lock-label {
		width: 19px;
	}

	.locks {
		color: #a4a4a4;
	}

	.locks button {
		width: 15px;
	}

	.layers {
		display: grid;
		flex: none;
		grid-template-rows: repeat(12, 1fr);
		height: 340px;
		margin: 1px 0 0;
		padding: 0 12px 0 0;
		background: #4c4c4c;
		list-style: none;
	}

	.layers li {
		display: flex;
		background: #535353;
		border-bottom: 1px solid #474747;
	}

	.layers .selected {
		background: #6b6b6b;
	}

	.visibility {
		flex: none;
		width: 20px;
		background: #535353;
		border-right: 1px solid #474747;
	}

	.empty {
		width: 11px;
		height: 9px;
		border: 1px solid #474747;
		border-color: #4c4c4c #616161 #616161 #4c4c4c;
	}

	.layer {
		flex: 1;
		justify-content: flex-start;
		min-width: 0;
		padding-left: 2px;
	}

	.clip {
		width: 11px;
		padding-left: 2px;
	}

	.type-thumb {
		display: flex;
		justify-content: center;
		width: 22px;
	}

	.thumb {
		flex: none;
		background: #333;
	}

	.name {
		margin-left: 6px;
		white-space: nowrap;
	}

	.base .name {
		padding-right: 3px;
		text-decoration: underline;
	}

	.background .name {
		font-style: italic;
	}

	.locked {
		display: flex;
		flex: none;
		align-items: center;
		width: 19px;
	}

	.layer-actions {
		display: flex;
		justify-content: flex-end;
		height: 17px;
		margin-top: auto;
		padding-right: 14px;
		border-top: 1px solid #464646;
	}

	.layer-actions button {
		width: 18px;
	}

	.layer-actions .off {
		color: #8a8a8a;
	}

	.fx {
		position: relative;
		font-size: 9px;
		font-style: italic;
	}

	.watermark {
		position: absolute;
		right: 9px;
		bottom: 6px;
		color: rgba(210, 210, 210, 0.75);
		font-family: Inter, sans-serif;
		font-size: 13px;
		line-height: 18px;
	}

	.watermark svg {
		position: absolute;
		top: 0;
		left: 0;
	}
</style>
